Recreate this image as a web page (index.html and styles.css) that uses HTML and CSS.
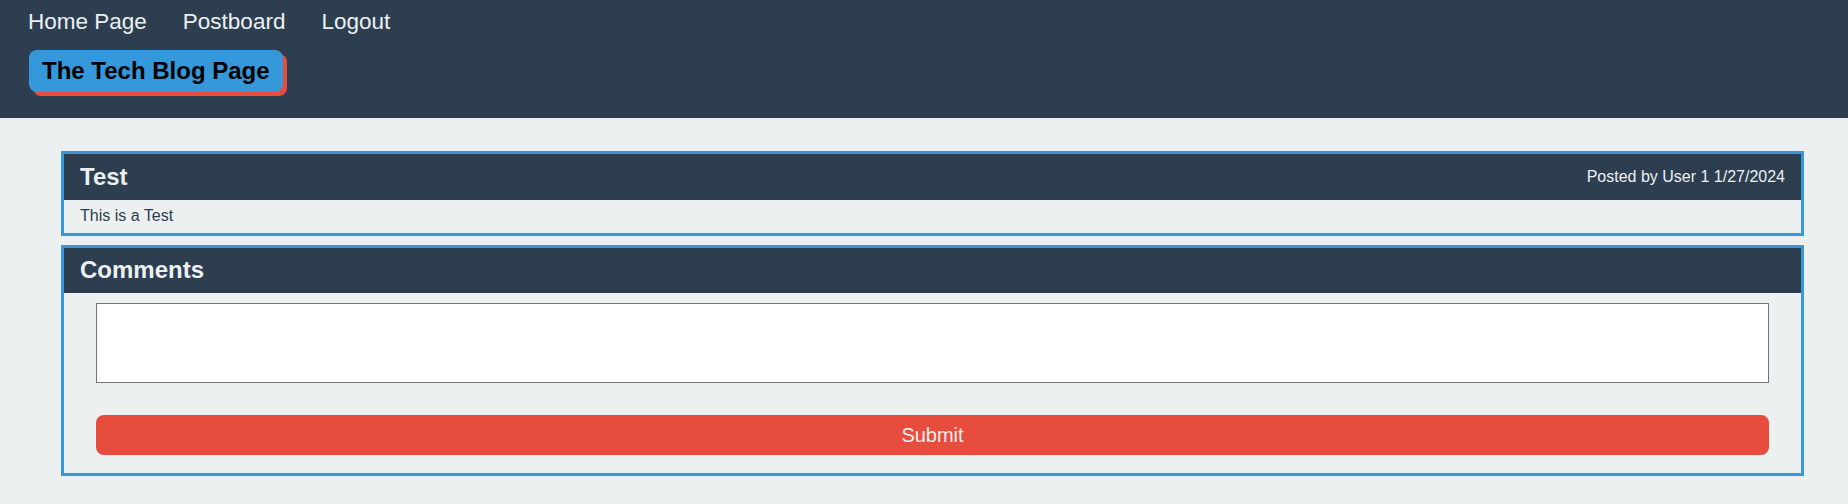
FILE: index.html
```html
<!DOCTYPE html>
<html lang="en">
<head>
<meta charset="utf-8">
<title>The Tech Blog Page</title>
<link rel="stylesheet" href="styles.css">
</head>
<body>
<header class="site-header">
  <nav class="nav">
    <a class="nav-link" href="#">Home Page</a>
    <a class="nav-link" href="#">Postboard</a>
    <a class="nav-link" href="#">Logout</a>
  </nav>
  <h1 class="brand">The Tech Blog Page</h1>
</header>
<main class="main">
  <section class="card post">
    <div class="card-header">
      <h2 class="card-title">Test</h2>
      <span class="meta">Posted by User 1 1/27/2024</span>
    </div>
    <div class="post-body">This is a Test</div>
  </section>
  <section class="card comments">
    <div class="card-header">
      <h2 class="card-title">Comments</h2>
    </div>
    <form class="comment-form">
      <textarea class="comment-input"></textarea>
      <button class="submit" type="button">Submit</button>
    </form>
  </section>
</main>
</body>
</html>
```

FILE: styles.css
```css
* { box-sizing: border-box; }

html, body {
  margin: 0;
  padding: 0;
}

body {
  background: #ecf0f1;
  font-family: "Liberation Sans", Arial, sans-serif;
  color: #2c3e50;
}

.site-header {
  background: #2c3e50;
  padding: 9px 28px 26px 28px;
  height: 118px;
}

.nav {
  display: flex;
  gap: 36px;
  height: 25px;
  margin-bottom: 16px;
}

.nav-link {
  color: #ecf0f1;
  text-decoration: none;
  font-size: 22.5px;
  line-height: 25px;
}

.brand {
  display: inline-block;
  margin: 0 0 0 1px;
  background: #3498db;
  color: #000;
  font-size: 24px;
  font-weight: bold;
  line-height: 27px;
  padding: 7px 13px 8px 13px;
  border-radius: 8px;
  box-shadow: 4px 4px 0 #e74c3c;
}

.main {
  padding: 33px 44px 0 61px;
}

.card {
  border: 3px solid #3498db;
}

.post {
  margin-bottom: 9px;
}

.card-header {
  background: #2c3e50;
  display: flex;
  align-items: center;
  justify-content: space-between;
  padding: 9px 16px;
  height: 46px;
}

.comments .card-header {
  height: 45px;
  padding: 8px 16px 9px 16px;
}

.card-title {
  margin: 0;
  font-size: 24px;
  font-weight: bold;
  line-height: 27.6px;
  color: #ecf0f1;
}

.meta {
  color: #ecf0f1;
  font-size: 16px;
}

.post-body {
  font-size: 16px;
  line-height: 18px;
  padding: 7px 16px 8px 16px;
  color: #2c3e50;
}

.comment-form {
  padding: 10px 32px 18px 32px;
}

.comment-input {
  display: block;
  width: 100%;
  height: 80px;
  border: 1px solid #767676;
  background: #fff;
  resize: none;
  margin: 0 0 32px 0;
  font-family: "Liberation Sans", Arial, sans-serif;
}

.submit {
  display: block;
  width: 100%;
  height: 40px;
  border: none;
  border-radius: 8px;
  background: #e74c3c;
  color: #ecf0f1;
  font-family: "Liberation Sans", Arial, sans-serif;
  font-size: 20px;
  padding: 0;
}
```
